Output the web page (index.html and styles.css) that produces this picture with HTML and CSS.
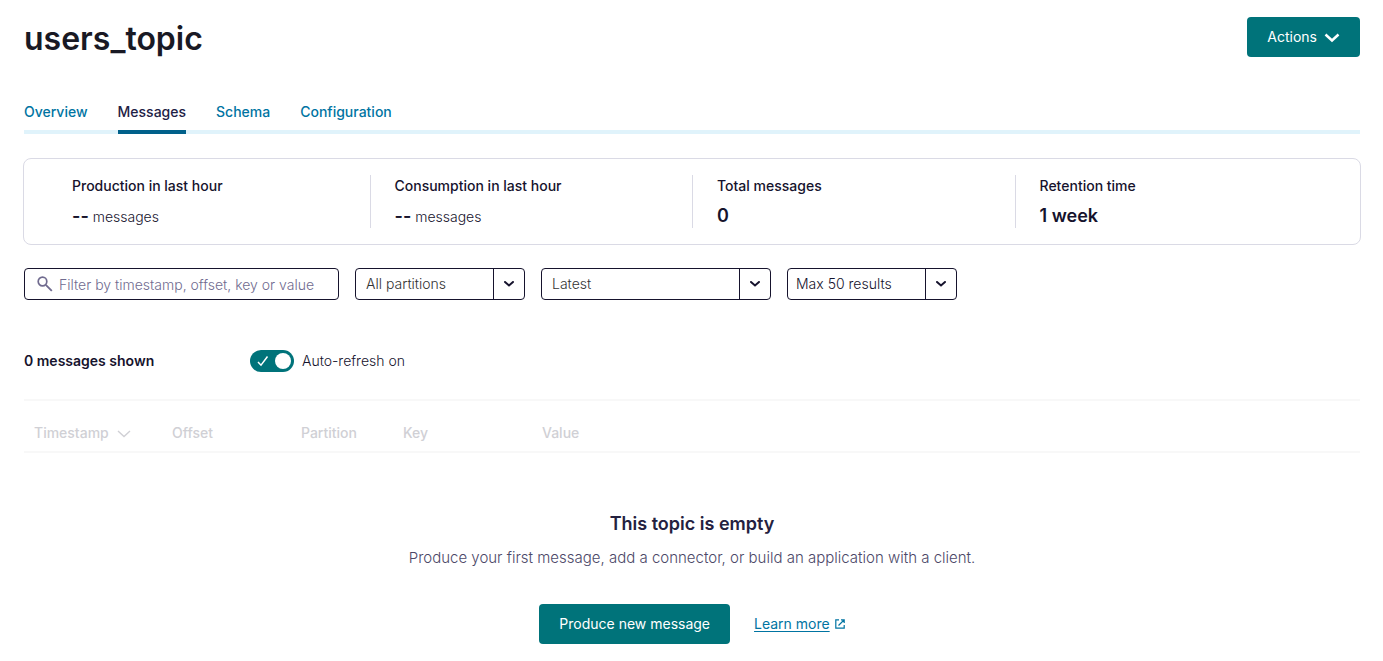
FILE: index.html
```html
<!DOCTYPE html>
<html lang="en">
<head>
<meta charset="utf-8">
<meta name="viewport" content="width=device-width, initial-scale=1">
<title>users_topic</title>
<link rel="stylesheet" href="styles.css">
</head>
<body>
<main class="page">
  <header class="page-header">
    <h1 class="page-title">users_topic</h1>
    <button class="button" type="button">Actions
      <svg class="button-icon" viewBox="0 0 16 16" aria-hidden="true"><path d="M1.5 5.5 8 11.5l6.500-6" fill="none" stroke="currentColor" stroke-width="2.500"/></svg>
    </button>
  </header>

  <nav class="tabs">
    <a class="tab" href="#overview">Overview</a>
    <a class="tab tab-active" href="#messages" aria-current="page">Messages</a>
    <a class="tab" href="#schema">Schema</a>
    <a class="tab" href="#configuration">Configuration</a>
  </nav>

  <section class="metrics">
    <div class="metric"><h2 class="metric-label">Production in last hour</h2><p class="metric-value"><strong>--</strong> messages</p></div>
    <div class="metric"><h2 class="metric-label">Consumption in last hour</h2><p class="metric-value"><strong>--</strong> messages</p></div>
    <div class="metric"><h2 class="metric-label">Total messages</h2><p class="metric-value"><strong>0</strong></p></div>
    <div class="metric"><h2 class="metric-label">Retention time</h2><p class="metric-value"><strong>1 week</strong></p></div>
  </section>

  <form class="filters">
    <label class="search">
      <svg class="search-icon" viewBox="0 0 16 16" aria-hidden="true"><circle cx="5.500" cy="5.500" r="4.300" fill="none" stroke="currentColor" stroke-width="1.700"/><path d="m8.800 8.800 6 6" fill="none" stroke="currentColor" stroke-width="1.900"/></svg>
      <input class="search-input" type="text" aria-label="Filter messages" placeholder="Filter by timestamp, offset, key or value">
    </label>
    <div class="select-box">
      <select class="select" aria-label="Partition"><option>All partitions</option></select>
      <span class="select-arrow"><svg viewBox="0 0 10 6" aria-hidden="true"><path d="m1 1 4 3.500L9 1" fill="none" stroke="currentColor" stroke-width="2" stroke-linecap="round"/></svg></span>
    </div>
    <div class="select-box select-box-wide">
      <select class="select" aria-label="Start from"><option>Latest</option></select>
      <span class="select-arrow"><svg viewBox="0 0 10 6" aria-hidden="true"><path d="m1 1 4 3.500L9 1" fill="none" stroke="currentColor" stroke-width="2" stroke-linecap="round"/></svg></span>
    </div>
    <div class="select-box">
      <select class="select select-limit" aria-label="Result limit"><option>Max 50 results</option></select>
      <span class="select-arrow"><svg viewBox="0 0 10 6" aria-hidden="true"><path d="m1 1 4 3.500L9 1" fill="none" stroke="currentColor" stroke-width="2" stroke-linecap="round"/></svg></span>
    </div>
  </form>

  <div class="status">
    <span class="status-count">0 messages shown</span>
    <label class="toggle">
      <span class="toggle-track">
        <input class="toggle-input" type="checkbox" checked>
        <svg class="toggle-check" viewBox="0 0 12 12" aria-hidden="true"><path d="m1 7 3 3.200L10.500 1.500" fill="none" stroke="currentColor" stroke-width="1.500"/></svg>
      </span>
      Auto-refresh on
    </label>
  </div>

  <table class="messages">
    <colgroup><col class="col-timestamp"><col class="col-offset"><col class="col-partition"><col class="col-key"><col></colgroup>
    <thead>
      <tr>
        <th scope="col">Timestamp<svg class="sort-icon" viewBox="0 0 14 8" aria-hidden="true"><path d="m1 1 6 5.500L13 1" fill="none" stroke="currentColor" stroke-width="1.400"/></svg></th>
        <th scope="col">Offset</th>
        <th scope="col">Partition</th>
        <th scope="col">Key</th>
        <th scope="col">Value</th>
      </tr>
    </thead>
  </table>

  <section class="empty">
    <h2 class="empty-title">This topic is empty</h2>
    <p class="empty-text">Produce your first message, add a connector, or build an application with a client.</p>
    <div class="empty-actions">
      <button class="button" type="button">Produce new message</button>
      <a class="link" href="#learn"><span class="link-text">Learn more</span><svg class="link-icon" viewBox="0 0 10 10" aria-hidden="true"><path d="M4 .8H.8v8.400h8.400V6M6 .8h3.200V4M9 1 3.500 6.500" fill="none" stroke="currentColor" stroke-width="1.200"/></svg></a>
    </div>
  </section>
</main>
</body>
</html>
```
FILE: styles.css
```css
* {
  box-sizing: border-box;
}

body {
  margin: 0;
  background: #fff;
  color: #16132d;
  font-family: Inter, "Liberation Sans", sans-serif;
  font-size: 14px;
  line-height: 20px;
}

h1,
h2,
p {
  margin: 0;
}

.page {
  padding: 17px 23px 17px 24px;
}

.page-header {
  display: flex;
  justify-content: space-between;
  align-items: flex-start;
}

.page-title {
  color: #191924;
  font-size: 32px;
  font-weight: 600;
  line-height: 44px;
}

.button {
  display: flex;
  align-items: center;
  gap: 7px;
  height: 40px;
  padding: 0 20px;
  border: 0;
  border-radius: 4px;
  background: #00737a;
  color: #fff;
  font: inherit;
}

.button-icon {
  width: 16px;
  height: 16px;
}

.tabs {
  display: flex;
  gap: 30px;
  margin-top: 41px;
  box-shadow: inset 0 -4px #e0f3fb;
}

.tab {
  padding-bottom: 8px;
  border-bottom: 4px solid transparent;
  color: #0074a2;
  font-size: 14px;
  font-weight: 500;
  text-decoration: none;
}

.tab-active {
  border-bottom-color: #00608a;
  color: #1d2145;
}

.metrics {
  display: grid;
  grid-template-columns: repeat(4, 1fr);
  margin: 24px -1px 0;
  padding: 16px 22px 16px 24px;
  border: 1px solid #dadae5;
  border-radius: 8px;
}

.metric {
  padding: 1px 24px 0;
  border-right: 1px solid #dadae5;
}

.metric:last-child {
  border-right: 0;
}

.metric-label {
  font-size: 14px;
  font-weight: 500;
}

.metric-value {
  margin-top: 8px;
  font-weight: 300;
  line-height: 23px;
}

.metric-value strong {
  font-size: 18px;
  font-weight: 600;
}

.filters {
  display: flex;
  gap: 16px;
  margin-top: 23px;
}

.search,
.select-box {
  display: flex;
  height: 32px;
  border: 1px solid #16132d;
  border-radius: 4px;
}

.search {
  align-items: center;
  gap: 6px;
  width: 315px;
  padding: 0 12px;
}

.search-icon {
  flex: none;
  width: 16px;
  height: 16px;
  color: #706b8f;
}

.search-input {
  flex: 1;
  min-width: 0;
  padding: 1px 0 0;
  border: 0;
  outline: 0;
  background: none;
  color: inherit;
  font: inherit;
  font-weight: 300;
}

.search-input::placeholder {
  color: #706b8f;
}

.select-box {
  position: relative;
  width: 170px;
}

.select-box-wide {
  width: 230px;
}

.select {
  width: 100%;
  padding: 0 40px 0 10px;
  border: 0;
  outline: 0;
  background: none;
  appearance: none;
  color: #333;
  font: inherit;
  font-weight: 300;
}

.select-limit {
  padding-left: 8px;
  color: #16132d;
}

.select-arrow {
  position: absolute;
  top: 0;
  right: 0;
  bottom: 0;
  display: flex;
  align-items: center;
  justify-content: center;
  width: 31px;
  border-left: 1px solid #16132d;
  pointer-events: none;
}

.select-arrow svg {
  width: 10px;
  height: 6px;
}

.status {
  display: flex;
  align-items: center;
  margin-top: 50px;
}

.status-count {
  width: 226px;
  font-weight: 600;
}

.toggle {
  display: flex;
  align-items: center;
  gap: 8px;
  font-weight: 300;
}

.toggle-track {
  position: relative;
  display: flex;
}

.toggle-input {
  display: flex;
  align-items: center;
  justify-content: flex-end;
  width: 44px;
  height: 22px;
  margin: 0;
  padding: 3px;
  border-radius: 11px;
  background: #00737a;
  appearance: none;
}

.toggle-input::after {
  width: 16px;
  height: 16px;
  border-radius: 50%;
  background: #fff;
  content: "";
}

.toggle-check {
  position: absolute;
  top: 5px;
  left: 7px;
  width: 12px;
  height: 12px;
  color: #fff;
}

.messages {
  width: 100%;
  margin-top: 27px;
  border-top: 2px solid #f8f8f8;
  border-bottom: 2px solid #f8f8f8;
  border-collapse: separate;
  border-spacing: 0;
  table-layout: fixed;
}

.messages th {
  padding: 22px 10px 8px;
  color: #d0d0d5;
  font-weight: 500;
  text-align: left;
  white-space: nowrap;
}

.sort-icon {
  width: 14px;
  height: 8px;
  margin-left: 8px;
}

.col-timestamp {
  width: 138px;
}

.col-offset {
  width: 129px;
}

.col-partition {
  width: 102px;
}

.col-key {
  width: 139px;
}

.empty {
  display: flex;
  flex-direction: column;
  align-items: center;
  margin-top: 59px;
  text-align: center;
}

.empty-title {
  color: #242140;
  font-size: 18px;
  font-weight: 600;
  line-height: 24px;
}

.empty-text {
  margin-top: 12px;
  color: #4c4868;
  font-size: 15px;
  font-weight: 300;
}

.empty-actions {
  display: flex;
  align-items: center;
  gap: 24px;
  margin-top: 36px;
}

.link {
  display: flex;
  align-items: center;
  gap: 5px;
  color: #0074a2;
  text-decoration: none;
}

.link-text {
  text-decoration: underline;
  text-underline-offset: 2px;
}

.link-icon {
  width: 10px;
  height: 10px;
}
```
